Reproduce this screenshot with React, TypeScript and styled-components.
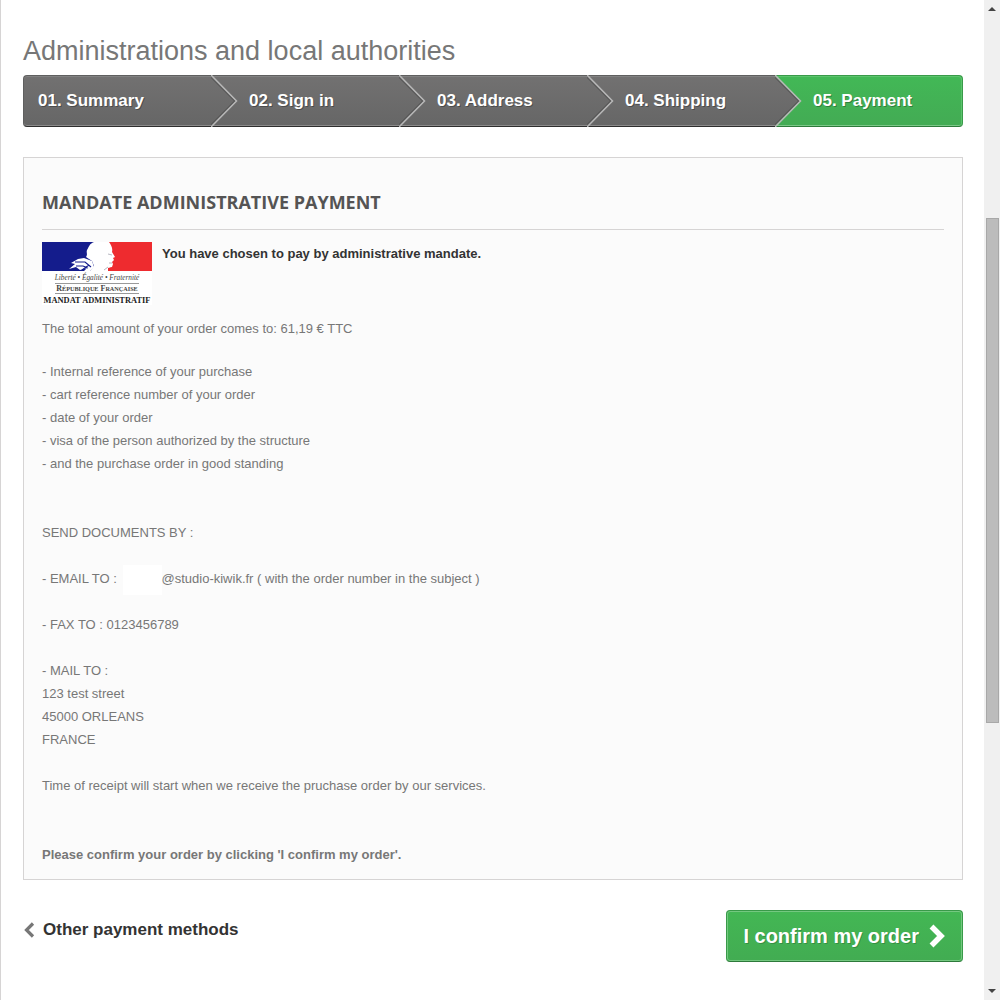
import React from "react";
import styled, { createGlobalStyle, css } from "styled-components";

const GlobalStyle = createGlobalStyle`
  *, *::before, *::after { box-sizing: border-box; }
  body {
    margin: 0;
    background: #ffffff;
    color: #777777;
    font: 13px/23px "Liberation Sans", Arial, Helvetica, sans-serif;
  }
  h1, h2, p, ol, ul { margin: 0; padding: 0; }
  ol, ul { list-style: none; }
`;

const Shell = styled.div`
  display: flex;
  height: 100vh;
  border-left: 1px solid #d6d4d4;
  overflow: hidden;
`;

const Page = styled.main`
  flex: 1;
  min-width: 0;
  padding: 35px 21px 0 22px;
`;

const Title = styled.h1`
  margin-bottom: 8px;
  font-size: 27px;
  font-weight: 400;
  line-height: 32px;
`;

const Steps = styled.ol`
  display: grid;
  grid-template-columns: repeat(5, 1fr);
  margin-bottom: 30px;
`;

const Step = styled.li<{ $current?: boolean }>`
  position: relative;
  height: 52px;
  padding-left: 38px;
  border: 1px solid;
  border-width: 1px 0;
  color: #ffffff;
  font-size: 17px;
  font-weight: 700;
  line-height: 50px;
  text-shadow: 1px 1px rgba(0, 0, 0, 0.3);
  white-space: nowrap;

  ${({ $current }) =>
    $current
      ? css`
          border-color: #399a49 #399a49 #2d7a3a;
          background: linear-gradient(#42b856, #43ab54);
        `
      : css`
          border-color: #5f5f5f #5f5f5f #2e2e2e;
          background: linear-gradient(#727171, #666666);
          box-shadow: inset 0 1px #828282, inset 0 -1px #8b8a8a;
        `}

  &:first-child {
    padding-left: 14px;
    border-left-width: 1px;
    border-radius: 4px 0 0 4px;
  }

  &:last-child {
    border-right-width: 1px;
    border-radius: 0 4px 4px 0;
    box-shadow: inset -1px 1px #5cc46d, inset 0 -1px #7cc888;
  }
`;

const StepArrow = styled.svg`
  position: absolute;
  z-index: 1;
  top: -1px;
  left: 100%;
  width: 28px;
  height: 52px;
`;

const Box = styled.section`
  padding: 31px 18px 13px;
  border: 1px solid #d6d4d4;
  background: #fbfbfb;
`;

const BoxTitle = styled.h2`
  margin-bottom: 12px;
  padding-bottom: 14px;
  border-bottom: 1px solid #d6d4d4;
  color: #555454;
  font: 700 18px/26px "Open Sans", sans-serif;
`;

const Intro = styled.div`
  display: flex;
  gap: 10px;
  margin-bottom: 12px;
`;

const MandateLogo = styled.svg`
  flex: none;
  width: 110px;
  height: 63px;
`;

const Lead = styled.p`
  color: #333333;
  font-weight: 700;
`;

const Amount = styled.p`
  margin-bottom: 20px;
`;

const Block = styled.div<{ $wide?: boolean }>`
  margin-bottom: ${({ $wide }) => ($wide ? 46 : 23)}px;
`;

const Redacted = styled.span`
  display: inline-block;
  width: 39px;
  height: 30px;
  margin: -6px 0 -6px 2px;
  background: #ffffff;
  vertical-align: middle;
`;

const Actions = styled.footer`
  display: flex;
  align-items: flex-start;
  justify-content: space-between;
  padding-top: 30px;
`;

const BackLink = styled.a`
  display: flex;
  align-items: center;
  gap: 8px;
  color: #333333;
  font-size: 17px;
  font-weight: 700;
  line-height: 40px;
  text-decoration: none;
`;

const ConfirmButton = styled.button`
  display: flex;
  align-items: center;
  gap: 10px;
  height: 52px;
  padding: 0 16px 0 16px;
  border: 1px solid #399a49;
  border-bottom-color: #2d7a3a;
  border-radius: 4px;
  background: linear-gradient(#43b754, #42ac52);
  box-shadow: inset 0 0 0 1px #74c880;
  color: #ffffff;
  font: 700 20px/48px "Liberation Sans", Arial, sans-serif;
  text-shadow: 1px 1px rgba(0, 0, 0, 0.2);
  cursor: pointer;
`;

const ScrollTrack = styled.div`
  display: flex;
  flex-direction: column;
  align-items: center;
  width: 16px;
  background: #f0f0f0;
`;

const ScrollEnd = styled.svg`
  flex: none;
  width: 16px;
  height: 17px;
`;

const ScrollSpace = styled.div<{ $share: number }>`
  flex: ${({ $share }) => $share} 1 0;
`;

const ScrollThumb = styled.div`
  flex: 504 1 0;
  width: 13px;
  border: 1px solid #a8a8a8;
  background: #bcbcbc;
`;

const steps = ["01. Summary", "02. Sign in", "03. Address", "04. Shipping", "05. Payment"];

const documents = [
  "Internal reference of your purchase",
  "cart reference number of your order",
  "date of your order",
  "visa of the person authorized by the structure",
  "and the purchase order in good standing",
];

function Chevron() {
  return (
    <StepArrow viewBox="0 0 28 52" aria-hidden="true">
      <defs>
        <linearGradient id="stepFill" x1="0" y1="0" x2="0" y2="1">
          <stop offset="0" stopColor="#727171" />
          <stop offset="1" stopColor="#666666" />
        </linearGradient>
      </defs>
      <path d="M0 1 L25 26 L0 51 Z" fill="url(#stepFill)" />
      <path d="M0 0 L25.500 26 L0 52" fill="none" stroke="#b8b8b8" strokeWidth="1.500" />
      <path d="M-1 1.500 L23.500 26 L-1 50.500" fill="none" stroke="#505050" strokeWidth="1" />
    </StepArrow>
  );
}

function Marianne() {
  return (
    <MandateLogo viewBox="0 0 110 63" role="img" aria-label="Mandat administratif">
      <rect width="110" height="63" fill="#ffffff" />
      <rect width="52" height="29" fill="#141c8c" />
      <rect x="66" width="44" height="29" fill="#ee2b2f" />
      <path
        d="M52 0 C47 2 47 5 45 8 C44 11 46 12 44 15 L50 19 L52 24 L48 29 H62 C63 26 66 26 70 25 L71 22 L70 20 L72 18 L71 16 L73 15 L70 10 C71 6 69 3 67 0 Z"
        fill="#ffffff"
      />
      <path d="M27 27 L33 22 L29 21 L36 17 L42 16 L50 19 L52 25 L48 29 H42 L45 26 L38 28 L34 25 Z" fill="#ffffff" />
      <path d="M33 20 L43 20 L49 25 M34 24 L41 24 L46 26 M40 28 L47 23" fill="none" stroke="#141c8c" strokeWidth="1.200" />
      <path d="M66 12 L70 13 M67 21 L70 21 M62 28 L66 25" fill="none" stroke="#b9b9c2" strokeWidth="1" />
      <g fill="#444444" textAnchor="middle" fontFamily="Liberation Serif, serif">
        <text x="55" y="38" fontSize="7.300" fontStyle="italic">
          Liberté • Égalité • Fraternité
        </text>
        <text x="55" y="49" fontSize="8" fontWeight="700">
          R<tspan fontSize="6.200">ÉPUBLIQUE</tspan> F<tspan fontSize="6.200">RANÇAISE</tspan>
        </text>
        <text x="55" y="61" fontSize="8.400" fontWeight="700" fill="#222222">
          MANDAT ADMINISTRATIF
        </text>
      </g>
      <path d="M13 41.500 H97 M13 51.500 H97" stroke="#999999" strokeWidth="1" />
    </MandateLogo>
  );
}

export default function App() {
  return (
    <>
      <GlobalStyle />
      <Shell>
        <Page>
          <Title>Administrations and local authorities</Title>
          <Steps>
            {steps.map((label, index) => {
              const current = index === steps.length - 1;
              return (
                <Step key={label} $current={current} aria-current={current ? "step" : undefined}>
                  {label}
                  {!current && <Chevron />}
                </Step>
              );
            })}
          </Steps>
          <Box>
            <BoxTitle>MANDATE ADMINISTRATIVE PAYMENT</BoxTitle>
            <Intro>
              <Marianne />
              <Lead>You have chosen to pay by administrative mandate.</Lead>
            </Intro>
            <Amount>The total amount of your order comes to: 61,19 € TTC</Amount>
            <Block $wide as="ul">
              {documents.map((item) => (
                <li key={item}>- {item}</li>
              ))}
            </Block>
            <Block>SEND DOCUMENTS BY :</Block>
            <Block>
              - EMAIL TO : <Redacted />
              @studio-kiwik.fr ( with the order number in the subject )
            </Block>
            <Block>- FAX TO : 0123456789</Block>
            <Block>
              - MAIL TO :<br />
              123 test street
              <br />
              45000 ORLEANS
              <br />
              FRANCE
            </Block>
            <Block $wide>Time of receipt will start when we receive the pruchase order by our services.</Block>
            <p>
              <strong>Please confirm your order by clicking 'I confirm my order'.</strong>
            </p>
          </Box>
          <Actions>
            <BackLink href="#payment-methods">
              <svg width="12" height="16" viewBox="0 0 12 16" aria-hidden="true">
                <path d="M10 1.500 L3.500 8 L10 14.500" fill="none" stroke="#777777" strokeWidth="3.200" />
              </svg>
              Other payment methods
            </BackLink>
            <ConfirmButton type="button">
              I confirm my order
              <svg width="17" height="24" viewBox="0 0 17 24" aria-hidden="true">
                <path d="M2.500 2.500 L12 12 L2.500 21.500" fill="none" stroke="#ffffff" strokeWidth="5.500" />
              </svg>
            </ConfirmButton>
          </Actions>
        </Page>
        <ScrollTrack aria-hidden="true">
          <ScrollEnd viewBox="0 0 16 17">
            <path d="M4 11 L8 7 L12 11 Z" fill="#444444" />
          </ScrollEnd>
          <ScrollSpace $share={201} />
          <ScrollThumb />
          <ScrollSpace $share={261} />
          <ScrollEnd viewBox="0 0 16 17">
            <path d="M4 6 L8 10 L12 6 Z" fill="#444444" />
          </ScrollEnd>
        </ScrollTrack>
      </Shell>
    </>
  );
}
